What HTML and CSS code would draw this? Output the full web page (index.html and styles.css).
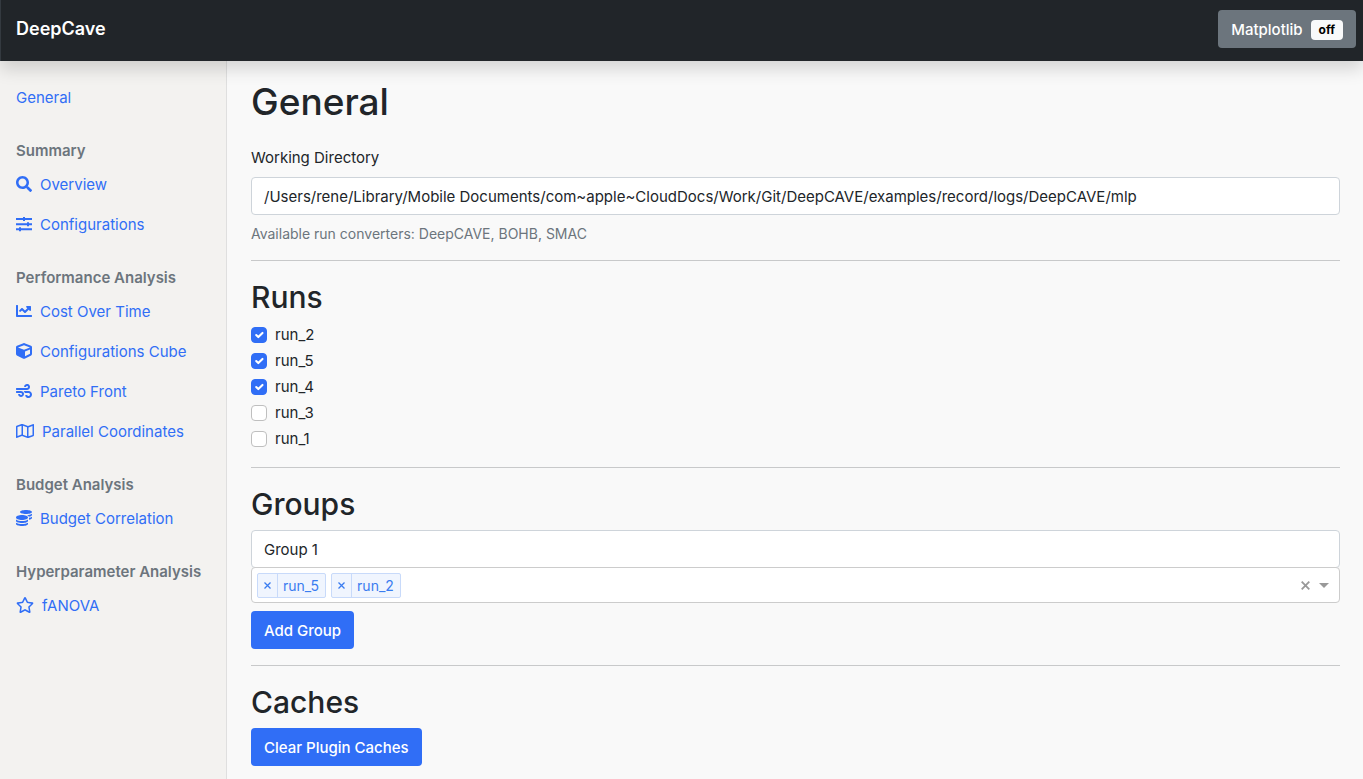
FILE: index.html
```html
<!DOCTYPE html>
<html lang="en">
<head>
<meta charset="utf-8">
<meta name="viewport" content="width=device-width, initial-scale=1">
<title>DeepCave</title>
<link rel="stylesheet" href="styles.css">
</head>
<body>
<header class="navbar">
  <a class="brand" href="#">DeepCave</a>
  <button class="btn btn-secondary" type="button">Matplotlib <span class="badge">off</span></button>
</header>
<div class="layout">
  <nav class="sidebar" aria-label="Plugins">
    <a class="nav-link" href="#">General</a>
    <h6 class="nav-heading">Summary</h6>
    <a class="nav-link" href="#"><svg class="icon" viewBox="0 0 512 512" aria-hidden="true"><path d="M505 442.7L405.3 343c-4.5-4.5-10.6-7-17-7H372c27.6-35.3 44-79.7 44-128C416 93.1 322.9 0 208 0S0 93.1 0 208s93.1 208 208 208c48.3 0 92.7-16.4 128-44v16.3c0 6.4 2.5 12.5 7 17l99.7 99.7c9.4 9.4 24.6 9.4 33.9 0l28.3-28.3c9.4-9.4 9.4-24.6.1-34zM208 336c-70.7 0-128-57.2-128-128 0-70.7 57.2-128 128-128 70.7 0 128 57.2 128 128 0 70.7-57.2 128-128 128z"/></svg>Overview</a>
    <a class="nav-link" href="#"><svg class="icon" viewBox="0 0 16 16" aria-hidden="true"><path d="M0 2h7V1h2v1h7v2H9v1H7V4H0zM0 7.2h11v-1h2v1h3v2h-3v1h-2v-1H0zM0 12.2h3v-1h2v1h11v2H5v1H3v-1H0z"/></svg>Configurations</a>
    <h6 class="nav-heading">Performance Analysis</h6>
    <a class="nav-link" href="#"><svg class="icon" viewBox="0 0 512 512" aria-hidden="true"><path d="M496 384H64V80c0-8.84-7.16-16-16-16H16C7.16 64 0 71.16 0 80v336c0 17.67 14.33 32 32 32h464c8.84 0 16-7.16 16-16v-32c0-8.84-7.16-16-16-16zM464 96H345.94c-21.38 0-32.09 25.85-16.97 40.97l32.4 32.4L288 242.75l-73.37-73.37c-12.5-12.5-32.76-12.5-45.25 0l-68.69 68.69c-6.25 6.25-6.25 16.38 0 22.63l22.62 22.62c6.25 6.25 16.38 6.25 22.63 0L192 237.25l73.37 73.37c12.5 12.5 32.76 12.5 45.25 0l96-96 32.4 32.4c15.12 15.12 40.97 4.41 40.97-16.97V112c.01-8.84-7.15-16-15.99-16z"/></svg>Cost Over Time</a>
    <a class="nav-link" href="#"><svg class="icon" viewBox="0 0 512 512" aria-hidden="true"><path d="M239.1 6.3l-208 78c-18.7 7-31.1 25-31.1 45v225.1c0 18.2 10.3 34.8 26.5 42.9l208 104c13.5 6.8 29.4 6.8 42.9 0l208-104c16.3-8.1 26.5-24.8 26.5-42.9V129.3c0-20-12.4-37.9-31.1-44.9l-208-78C262 2.2 250 2.2 239.1 6.3zM256 68.4l192 72v1.1l-192 78-192-78v-1.1l192-72zm32 356V275.5l160-65v133.9l-160 80z"/></svg>Configurations Cube</a>
    <a class="nav-link" href="#"><svg class="icon" viewBox="0 0 512 512" aria-hidden="true"><path d="M156.7 256H16c-8.8 0-16 7.2-16 16v32c0 8.8 7.2 16 16 16h142.2c15.9 0 30.8 10.9 33.4 26.6 3.3 20-12.1 37.4-31.6 37.4-14.1 0-26.1-9.2-30.4-21.9-2.1-6.3-8.6-10.1-15.2-10.1H81.6c-9.8 0-17.7 8.8-15.9 18.4 8.6 44.1 47.6 77.6 94.2 77.6 57.1 0 102.7-50.1 95.2-108.6C249 291 205.4 256 156.7 256zM16 224h336c59.7 0 106.8-54.8 93.8-116.7-7.6-36.2-36.9-65.5-73.1-73.1-55.4-11.6-105.1 24.9-114.9 75.5-1.9 9.6 6.1 18.3 15.8 18.3h32.8c6.7 0 13.1-3.8 15.2-10.1C325.9 105.2 337.9 96 352 96c19.4 0 34.9 17.4 31.6 37.4-2.6 15.7-17.4 26.6-33.4 26.6H16c-8.8 0-16 7.2-16 16v32c0 8.8 7.2 16 16 16zm384 32H243.7c19.3 16.6 33.2 38.8 39.8 64H400c26.5 0 48 21.5 48 48s-21.5 48-48 48c-17.9 0-33.3-9.9-41.6-24.4-2.9-5-8.7-7.6-14.5-7.6h-33.8c-10.9 0-19 10.8-15.3 21.1 17.8 50.6 70.5 84.8 129.4 72.3 41.2-8.7 75.1-41.6 84.7-82.7C526.1 321.8 470.8 256 400 256z"/></svg>Pareto Front</a>
    <a class="nav-link" href="#"><svg class="icon icon-wide" viewBox="0 0 576 512" aria-hidden="true"><path d="M560.02 32c-1.96 0-3.98.37-5.96 1.16L384.01 96H384L212 35.28A64.252 64.252 0 0 0 191.76 32c-6.69 0-13.37 1.05-19.81 3.14L20.12 87.95A32.006 32.006 0 0 0 0 117.66v346.32C0 473.17 7.53 480 15.99 480c1.96 0 3.97-.37 5.96-1.16L192 416l172 60.71a63.98 63.98 0 0 0 40.05.15l151.83-52.81A31.996 31.996 0 0 0 576 394.34V48.02c0-9.19-7.53-16.02-15.98-16.02zM224 90.42l128 45.19v285.97l-128-45.19V90.42zM48 418.05V129.07l128-44.53v286.2l-.64.23L48 418.05zm480-35.13l-128 44.53V141.26l.64-.24L528 93.95v288.97z"/></svg>Parallel Coordinates</a>
    <h6 class="nav-heading">Budget Analysis</h6>
    <a class="nav-link" href="#"><svg class="icon" viewBox="0 0 512 512" aria-hidden="true"><path d="M0 405.3V448c0 35.3 86 64 192 64s192-28.7 192-64v-42.7C342.7 434.4 267.2 448 192 448S41.3 434.4 0 405.3zM320 128c106 0 192-28.7 192-64S426 0 320 0 128 28.7 128 64s86 64 192 64zM0 300.4V352c0 35.3 86 64 192 64s192-28.7 192-64v-51.6c-41.3 34-116.9 51.6-192 51.6S41.3 334.4 0 300.4zm416 11c57.3-11.1 96-31.7 96-55.4v-42.7c-23.2 16.4-57.3 27.6-96 34.5v63.6zM192 160C86 160 0 195.8 0 240s86 80 192 80 192-35.8 192-80-86-80-192-80zm219.3 56.3c60-10.8 100.7-32 100.7-56.3v-42.7c-35.5 25.1-96.5 38.6-160.7 41.8 29.5 14.3 51.2 33.5 60 57.2z"/></svg>Budget Correlation</a>
    <h6 class="nav-heading">Hyperparameter Analysis</h6>
    <a class="nav-link" href="#"><svg class="icon icon-wide" viewBox="0 0 576 512" aria-hidden="true"><path d="M528.1 171.5L382 150.2 316.7 17.8c-11.7-23.6-45.6-23.9-57.4 0L194 150.2 47.9 171.5c-26.2 3.8-36.7 36.1-17.7 54.6l105.7 103-25 145.5c-4.5 26.3 23.2 46 46.4 33.7L288 439.6l130.7 68.7c23.2 12.2 50.9-7.4 46.4-33.7l-25-145.5 105.7-103c19-18.5 8.5-50.8-17.7-54.6zM388.6 312.3l23.7 138.4L288 385.4l-124.3 65.3 23.7-138.4-100.6-98 139-20.2 62.2-126 62.2 126 139 20.2-100.6 98z"/></svg>fANOVA</a>
  </nav>
  <main class="content">
    <h1>General</h1>
    <label class="form-label" for="working-dir">Working Directory</label>
    <input class="form-control" id="working-dir" type="text" value="/Users/rene/Library/Mobile Documents/com~apple~CloudDocs/Work/Git/DeepCAVE/examples/record/logs/DeepCAVE/mlp">
    <p class="form-text">Available run converters: DeepCAVE, BOHB, SMAC</p>
    <hr>
    <h2>Runs</h2>
    <div class="checks">
      <label class="check"><input type="checkbox" checked>run_2</label>
      <label class="check"><input type="checkbox" checked>run_5</label>
      <label class="check"><input type="checkbox" checked>run_4</label>
      <label class="check"><input type="checkbox">run_3</label>
      <label class="check"><input type="checkbox">run_1</label>
    </div>
    <hr>
    <h2>Groups</h2>
    <input class="form-control" type="text" value="Group 1" aria-label="Group name">
    <div class="multi-select">
      <span class="tag"><button class="tag-remove" type="button" aria-label="Remove run_5"><svg viewBox="0 0 7 7" aria-hidden="true"><path d="M.5.5l6 6M6.500.5l-6 6"/></svg></button><span class="tag-label">run_5</span></span>
      <span class="tag"><button class="tag-remove" type="button" aria-label="Remove run_2"><svg viewBox="0 0 7 7" aria-hidden="true"><path d="M.5.5l6 6M6.500.5l-6 6"/></svg></button><span class="tag-label">run_2</span></span>
      <input class="multi-input" type="text" role="combobox" aria-expanded="false" aria-label="Runs in group">
      <button class="multi-clear" type="button" aria-label="Clear all"><svg viewBox="0 0 9 9" aria-hidden="true"><path d="M.7.7l7.600 7.600M8.300.7L.7 8.300"/></svg></button>
      <button class="multi-arrow" type="button" aria-label="Open list"><svg viewBox="0 0 10 5" aria-hidden="true"><path d="M0 0h10L5 5z"/></svg></button>
    </div>
    <button class="btn btn-primary" type="button">Add Group</button>
    <hr>
    <h2>Caches</h2>
    <button class="btn btn-primary" type="button">Clear Plugin Caches</button>
  </main>
</div>
</body>
</html>
```
FILE: styles.css
```css
*, *::before, *::after { box-sizing: border-box; }

body {
  margin: 0;
  min-height: 100vh;
  display: flex;
  flex-direction: column;
  background: #f9f9f9;
  color: #212529;
  font-family: Inter, "Liberation Sans", sans-serif;
  font-size: 15px;
  line-height: 24px;
}

h1, h2, h6, p { margin: 0; }
input, button { font: inherit; color: inherit; }
a { text-decoration: none; }

.navbar {
  position: relative;
  z-index: 1;
  display: flex;
  align-items: center;
  justify-content: space-between;
  height: 61px;
  padding: 0 7px 3px 15px;
  background: #212529;
  border-left: 1px solid #343a40;
  box-shadow: 0 8px 16px rgba(0, 0, 0, 0.15);
}
.brand { color: #fff; font-size: 18px; font-weight: 600; }

.btn {
  height: 38px;
  padding: 2px 13px 0;
  border: 0;
  border-radius: 4px;
  color: #fff;
  font-weight: 500;
  cursor: pointer;
}
.btn-primary { background: #306ef6; }
.btn-secondary {
  display: flex;
  align-items: center;
  gap: 8px;
  background: #6c757d;
}
.badge {
  padding: 0 8px;
  border-radius: 4px;
  background: #f8f9fa;
  color: #000;
  font-size: 12px;
  font-weight: 700;
  line-height: 20px;
}

.layout { display: flex; flex: 1; }

.sidebar {
  flex: 0 0 227px;
  padding: 16px 0;
  background: #f3f2f0;
  border-right: 1px solid #dfdfdf;
}
.nav-link {
  display: flex;
  align-items: center;
  gap: 8px;
  height: 40px;
  padding: 2px 16px 0;
  color: #306ef6;
}
.nav-heading {
  margin: 22px 0 1px 16px;
  color: #6c757d;
  font-size: 15px;
  font-weight: 600;
  line-height: 24px;
  white-space: nowrap;
}
.icon { width: 16px; height: 16px; margin-bottom: 2px; fill: currentColor; }
.icon-wide { width: 18px; }

.content { flex: 1; min-width: 0; padding: 17px 23px 13px 24px; }
h1 { margin-bottom: 20px; font-size: 37px; font-weight: 500; line-height: 48px; }
h2 { margin-bottom: 7px; padding-top: 1px; font-size: 30px; font-weight: 500; line-height: 38px; }
hr { margin: 16px 0; border: 0; border-top: 1px solid #c8c9ca; }

.form-label { display: block; margin-bottom: 7px; }
.form-control {
  display: block;
  width: 100%;
  height: 38px;
  padding: 0 12px;
  border: 1px solid #ced4da;
  border-radius: 4px;
  background: #fff;
}
.form-text { margin-top: 8px; color: #6c757d; font-size: 14px; line-height: 21px; }

.checks { display: flex; flex-direction: column; align-items: flex-start; gap: 2px; }
.check { display: flex; align-items: center; gap: 8px; }
.check input {
  appearance: none;
  width: 16px;
  height: 16px;
  margin: 0;
  border: 1px solid #bfbfbf;
  border-radius: 4px;
  background: #fff;
}
.check input:checked {
  border-color: #306ef6;
  background: #306ef6 url("data:image/svg+xml,%3Csvg xmlns='http://www.w3.org/2000/svg' viewBox='0 0 20 20'%3E%3Cpath fill='none' stroke='%23fff' stroke-linecap='round' stroke-linejoin='round' stroke-width='3' d='M6 10l3 3 6-6'/%3E%3C/svg%3E") center / contain no-repeat;
}

.multi-select {
  display: flex;
  align-items: center;
  height: 36px;
  margin: -1px 0 8px;
  padding: 0 10px 0 5px;
  border: 1px solid #ccc;
  border-radius: 4px;
  background: #fff;
}
.tag {
  display: flex;
  height: 25px;
  margin-right: 5px;
  border: 1px solid #c8dafa;
  border-radius: 2px;
  background: #f0f5fe;
  color: #3a7cf0;
  font-size: 14px;
  line-height: 23px;
}
.tag-remove {
  display: flex;
  align-items: center;
  padding: 0 6px;
  border: 0;
  border-right: 1px solid #c8dafa;
  background: none;
  cursor: pointer;
}
.tag-remove svg { width: 7px; height: 7px; fill: none; stroke: currentColor; stroke-width: 1.3; }
.tag-label { padding: 0 6px 0 5px; }
.multi-input { flex: 1; min-width: 0; border: 0; outline: 0; background: none; }
.multi-clear, .multi-arrow { display: flex; padding: 0; border: 0; background: none; color: #999; cursor: pointer; }
.multi-clear { margin-right: 9px; }
.multi-clear svg { width: 9px; height: 9px; fill: none; stroke: currentColor; stroke-width: 1.8; }
.multi-arrow svg { width: 10px; height: 5px; fill: currentColor; }
```
